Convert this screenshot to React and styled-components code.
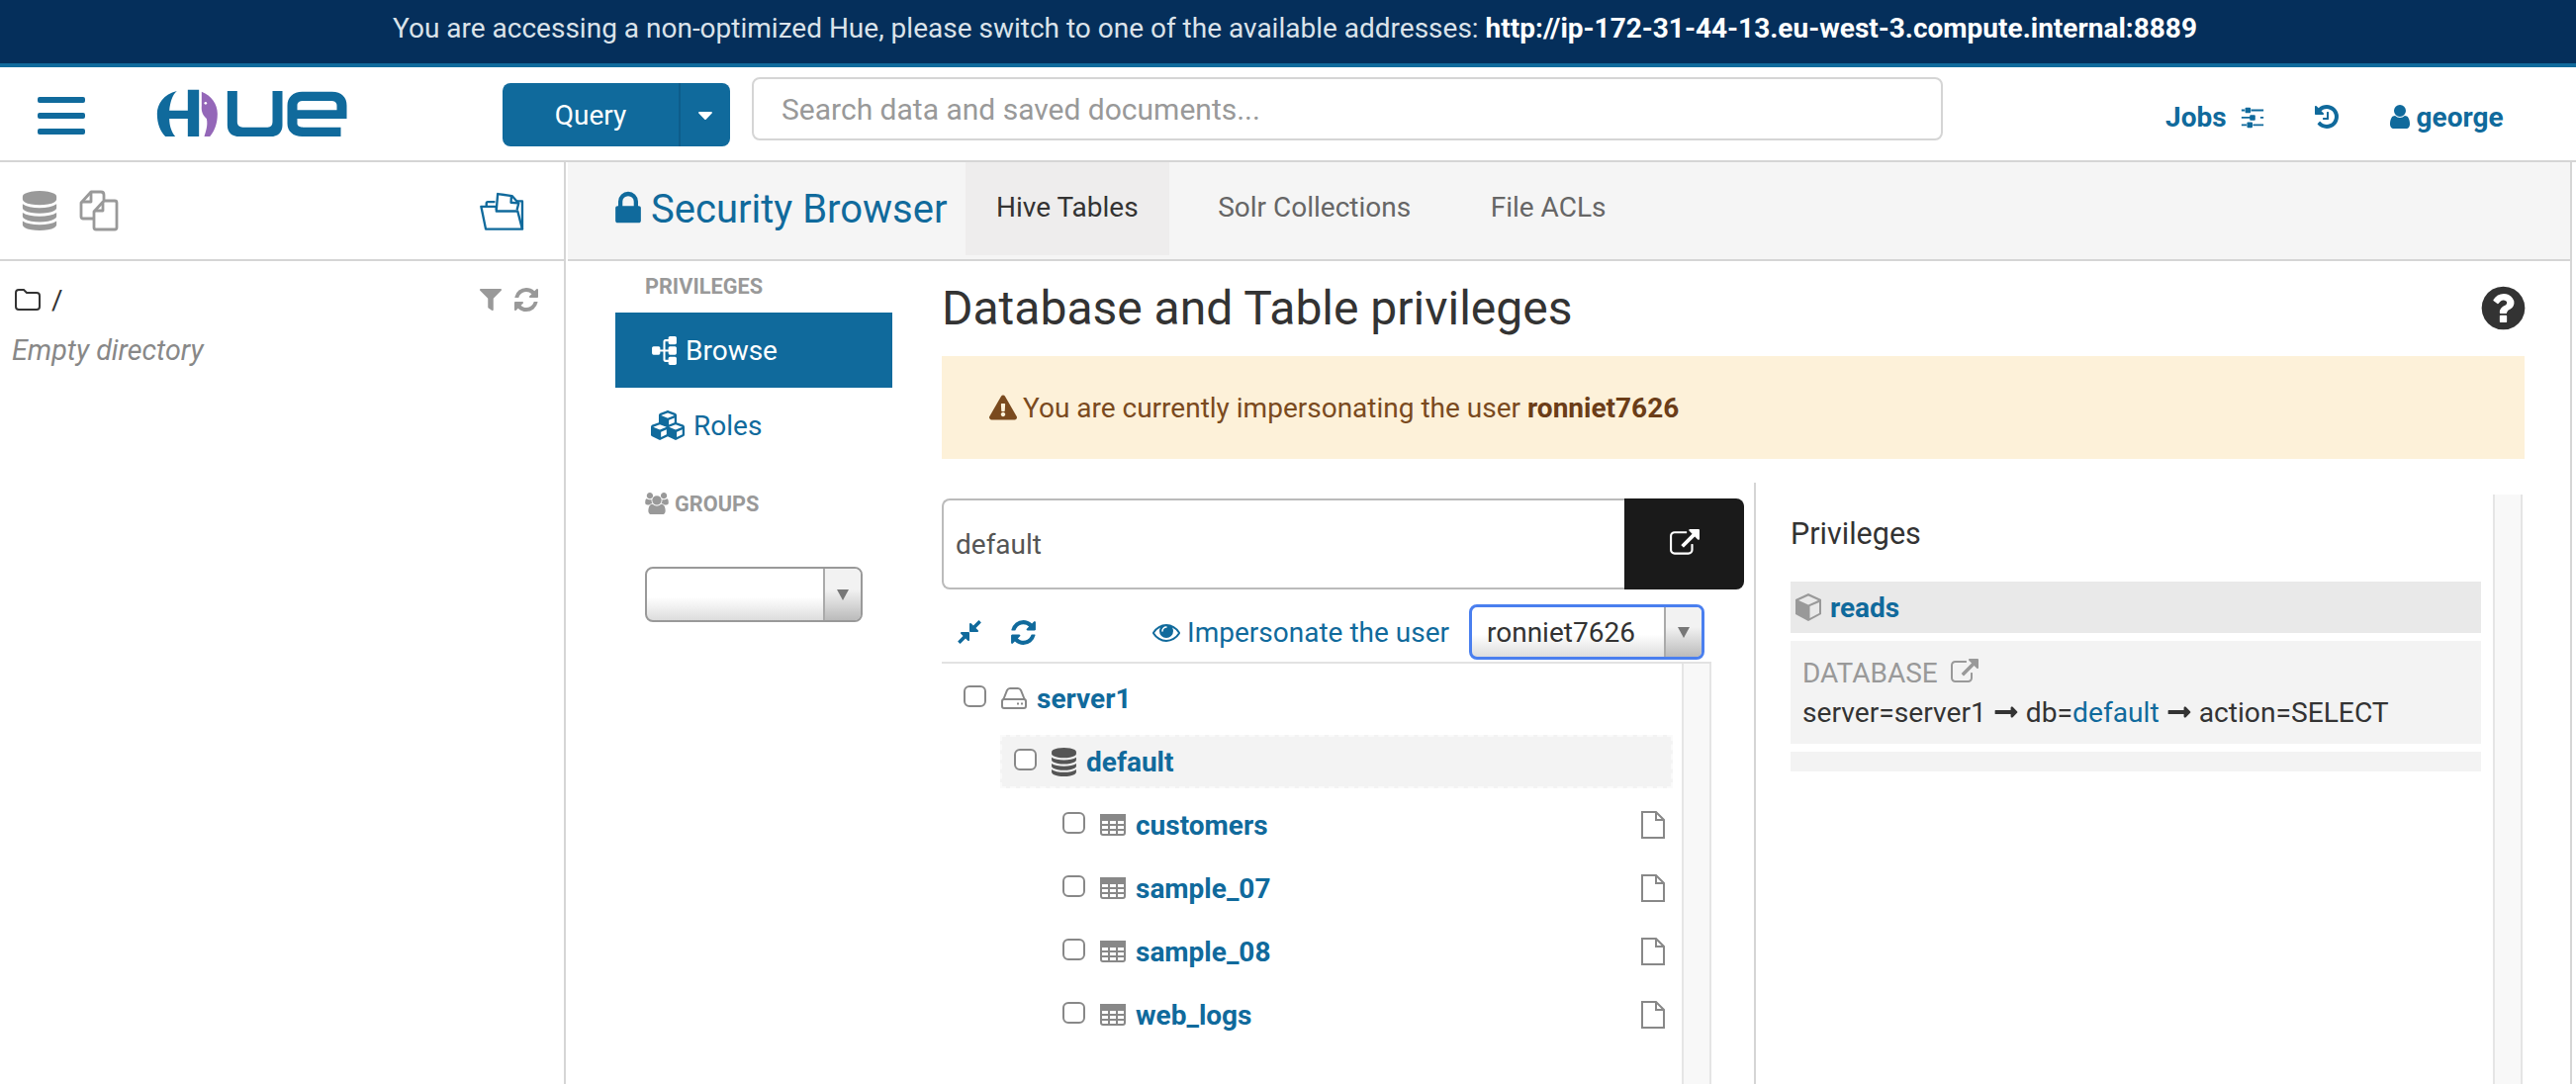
import styled, { createGlobalStyle } from "styled-components";
import { FaCubes, FaFilter, FaExclamationTriangle, FaLongArrowAltRight, FaCaretDown } from "react-icons/fa";

const BRAND = "#106a9c";

const paths = {
  refresh: "M1639 1056q0 5-1 7-64 268-268 434.5t-478 166.5q-146 0-282.5-55t-243.5-157l-129 129q-19 19-45 19t-45-19-19-45v-448q0-26 19-45t45-19h448q26 0 45 19t19 45-19 45l-137 137q71 66 161 102t187 36q134 0 250-65t186-179q11-17 53-117 8-23 30-23h192q13 0 22.5 9.5t9.5 22.5zm25-800v448q0 26-19 45t-45 19h-448q-26 0-45-19t-19-45 19-45l138-138q-148-137-349-137-134 0-250 65t-186 179q-11 17-53 117-8 23-30 23h-199q-13 0-22.5-9.5t-9.5-22.5v-7q65-268 270-434.5t480-166.5q146 0 284 55.5t245 156.5l130-129q19-19 45-19t45 19 19 45z",
  compress: "M896 960v448q0 26-19 45t-45 19-45-19l-144-144-332 332q-10 10-23 10t-23-10l-114-114q-10-10-10-23t10-23l332-332-144-144q-19-19-19-45t19-45 45-19h448q26 0 45 19t19 45zm755-672q0 13-10 23l-332 332 144 144q19 19 19 45t-19 45-45 19h-448q-26 0-45-19t-19-45v-448q0-26 19-45t45-19 45 19l144 144 332-332q10-10 23-10t23 10l114 114q10 10 10 23z",
  sitemap: "M1792 1248v320q0 40-28 68t-68 28h-320q-40 0-68-28t-28-68v-320q0-40 28-68t68-28h96v-192h-512v192h96q40 0 68 28t28 68v320q0 40-28 68t-68 28h-320q-40 0-68-28t-28-68v-320q0-40 28-68t68-28h96v-192h-512v192h96q40 0 68 28t28 68v320q0 40-28 68t-68 28h-320q-40 0-68-28t-28-68v-320q0-40 28-68t68-28h96v-192q0-52 38-90t90-38h512v-192h-96q-40 0-68-28t-28-68v-320q0-40 28-68t68-28h320q40 0 68 28t28 68v320q0 40-28 68t-68 28h-96v192h512q52 0 90 38t38 90v192h96q40 0 68 28t28 68z",
  external: "M1408 928v320q0 119-84.5 203.5t-203.5 84.5h-832q-119 0-203.5-84.5t-84.5-203.5v-832q0-119 84.5-203.5t203.5-84.5h704q14 0 23 9t9 23v64q0 14-9 23t-23 9h-704q-66 0-113 47t-47 113v832q0 66 47 113t113 47h832q66 0 113-47t47-113v-320q0-14 9-23t23-9h64q14 0 23 9t9 23zm384-864v512q0 26-19 45t-45 19-45-19l-176-176-652 652q-10 10-23 10t-23-10l-114-114q-10-10-10-23t10-23l652-652-176-176q-19-19-19-45t19-45 45-19h512q26 0 45 19t19 45z",
  lock: "M640 768h512v-192q0-106-75-181t-181-75-181 75-75 181v192zm832 96v576q0 40-28 68t-68 28h-960q-40 0-68-28t-28-68v-576q0-40 28-68t68-28h32v-192q0-184 132-316t316-132 316 132 132 316v192h32q40 0 68 28t28 68z",
  user: "M1536 1399q0 109-62.5 187t-150.5 78h-854q-88 0-150.5-78t-62.5-187q0-85 8.5-160.5t31.5-152 58.5-131 94-89 134.5-34.5q131 128 313 128t313-128q76 0 134.5 34.5t94 89 58.5 131 31.5 152 8.5 160.5zm-256-887q0 159-112.5 271.5t-271.5 112.5-271.5-112.5-112.5-271.5 112.5-271.5 271.5-112.5 271.5 112.5 112.5 271.5z",
  database: "M896 768q237 0 443-43t325-127v170q0 69-103 128t-280 93.5-385 34.5-385-34.5-280-93.5-103-128v-170q119 84 325 127t443 43zm0 768q237 0 443-43t325-127v170q0 69-103 128t-280 93.5-385 34.5-385-34.5-280-93.5-103-128v-170q119 84 325 127t443 43zm0-384q237 0 443-43t325-127v170q0 69-103 128t-280 93.5-385 34.5-385-34.5-280-93.5-103-128v-170q119 84 325 127t443 43zm0-1152q208 0 385 34.5t280 93.5 103 128v128q0 69-103 128t-280 93.5-385 34.5-385-34.5-280-93.5-103-128v-128q0-69 103-128t280-93.5 385-34.5z",
  question: "M1024 1376v-192q0-14-9-23t-23-9h-192q-14 0-23 9t-9 23v192q0 14 9 23t23 9h192q14 0 23-9t9-23zm256-672q0-88-55.5-163t-138.5-116-170-41q-243 0-371 213-15 24 8 42l132 100q7 6 19 6 16 0 25-12 53-68 86-92 34-24 86-24 48 0 85.5 26t37.5 59q0 38-20 61t-68 45q-63 28-115.5 86.5t-52.5 125.5v36q0 14 9 23t23 9h192q14 0 23-9t9-23q0-19 21.5-49.5t54.5-49.5q32-18 49-28.5t46-35 44.5-48 28-60.5 12.5-81zm384 192q0 209-103 385.5t-279.5 279.5-385.5 103-385.5-103-279.5-279.5-103-385.5 103-385.5 279.5-279.5 385.5-103 385.5 103 279.5 279.5 103 385.5z",
  eye: "M1664 960q-152-236-381-353 61 104 61 225 0 185-131.5 316.5t-316.5 131.5-316.5-131.5-131.5-316.5q0-121 61-225-229 117-381 353 133 205 333.5 326.5t434.5 121.5 434.5-121.5 333.5-326.5zm-720-384q0-20-14-34t-34-14q-125 0-214.5 89.5t-89.5 214.5q0 20 14 34t34 14 34-14 14-34q0-86 61-147t147-61q20 0 34-14t14-34zm848 384q0 34-20 69-140 230-376.5 368.5t-499.5 138.5-499.5-139-376.5-368q-20-35-20-69t20-69q140-229 376.5-368t499.5-139 499.5 139 376.5 368q20 35 20 69z",
  history: "M1664 896q0 156-61 298t-164 245-245 164-298 61q-172 0-327-72.5t-264-204.5q-7-10-6.5-22.5t8.5-20.5l137-138q10-9 25-9 16 2 23 12 73 95 179 147t225 52q104 0 198.5-40.5t163.5-109.5 109.5-163.5 40.5-198.5-40.5-198.5-109.5-163.5-163.5-109.5-198.5-40.5q-98 0-188 35.5t-160 101.5l137 138q31 30 14 69-17 40-59 40h-448q-26 0-45-19t-19-45v-448q0-42 40-59 39-17 69 14l130 129q107-101 244.5-156.5t284.5-55.5q156 0 298 61t245 164 164 245 61 298zm-640-288v448q0 14-9 23t-23 9h-320q-14 0-23-9t-9-23v-64q0-14 9-23t23-9h224v-352q0-14 9-23t23-9h64q14 0 23 9t9 23z",
  sliders: "M480 1408v128h-352v-128h352zm352-128q26 0 45 19t19 45v256q0 26-19 45t-45 19h-256q-26 0-45-19t-19-45v-256q0-26 19-45t45-19h256zm160-384v128h-864v-128h864zm-640-512v128h-224v-128h224zm1312 1024v128h-736v-128h736zm-960-1152q26 0 45 19t19 45v256q0 26-19 45t-45 19h-256q-26 0-45-19t-19-45v-256q0-26 19-45t45-19h256zm320 512q26 0 45 19t19 45v256q0 26-19 45t-45 19h-256q-26 0-45-19t-19-45v-256q0-26 19-45t45-19h256zm640 128v128h-224v-128h224zm0-512v128h-864v-128h864z",
};

const USERS_PATH = "M593 896q-162 5-265 128h-134q-82 0-138-40.5t-56-118.5q0-353 124-353 6 0 43.5 21t97.5 42.5 119 21.5q67 0 133-23-5 37-5 66 0 139 81 256zm1071 637q0 120-73 189.5t-194 69.5h-874q-121 0-194-69.5t-73-189.5q0-53 3.5-103.5t14-109 26.5-108.5 43-97.5 62-81 85.5-53.5 111.5-20q10 0 43 21.5t73 48 107 48 135 21.5 135-21.5 107-48 73-48 43-21.5q61 0 111.5 20t85.5 53.5 62 81 43 97.5 26.5 108.5 14 109 3.5 103.5zm-1024-1277q0 106-75 181t-181 75-181-75-75-181 75-181 181-75 181 75 75 181zm704 384q0 159-112.5 271.5t-271.5 112.5-271.5-112.5-112.5-271.5 112.5-271.5 271.5-112.5 271.5 112.5 112.5 271.5zm576 225q0 78-56 118.5t-138 40.5h-134q-103-123-265-128 81-117 81-256 0-29-5-66 66 23 133 23 59 0 119-21.5t97.5-42.5 43.5-21q124 0 124 353zm-128-609q0 106-75 181t-181 75-181-75-75-181 75-181 181-75 181 75 75 181z";

const GlobalStyle = createGlobalStyle`
  html, body { margin: 0; padding: 0; height: 1096px; overflow: hidden; background: #fff; }
  body { font-family: Roboto, "Liberation Sans", sans-serif; font-size: 28px; color: #333; }
  * { box-sizing: border-box; }
`;

const Page = styled.div`
  width: 2604px;
  height: 1096px;
  display: flex;
  flex-direction: column;
  overflow: hidden;
`;

const Banner = styled.div`
  height: 68px;
  flex: none;
  background: #052f5b;
  border-bottom: 4px solid ${BRAND};
  color: #dbe3ea;
  font-size: 28px;
  line-height: 58px;
  text-align: center;
  padding-left: 14px;
  b { color: #fff; font-weight: 700; }
`;

const Nav = styled.div`
  height: 96px;
  flex: none;
  border-bottom: 2px solid #d5d5d5;
  display: flex;
  align-items: flex-start;
  padding-left: 38px;
`;

const Hamburger = styled.div`
  width: 48px;
  margin-top: 30px;
  display: flex;
  flex-direction: column;
  gap: 10px;
  span { height: 6px; border-radius: 2px; background: ${BRAND}; }
`;

const LogoMark = styled.svg`
  width: 197px;
  height: 49px;
  margin: 22px 0 0 71px;
  flex: none;
`;

const QueryGroup = styled.div`
  width: 230px;
  height: 64px;
  margin: 16px 0 0 154px;
  flex: none;
  display: flex;
  background: ${BRAND};
  border-radius: 8px;
  color: #fff;
`;

const QueryLabel = styled.div`
  width: 180px;
  border-right: 2px solid #0d5d8b;
  text-align: center;
  line-height: 66px;
  font-size: 28px;
`;

const QueryCaret = styled.div`
  flex: 1;
  display: flex;
  align-items: center;
  justify-content: center;
  font-size: 24px;
`;

const Search = styled.input`
  width: 1204px;
  height: 64px;
  margin: 10px 0 0 22px;
  flex: none;
  border: 2px solid #d5d5d5;
  border-radius: 8px;
  padding: 0 28px;
  font: 30px Roboto, sans-serif;
  outline: none;
  &::placeholder { color: #999; opacity: 1; }
`;

const NavLink = styled.div`
  display: flex;
  align-items: center;
  gap: ${(p) => p.$gap || 0}px;
  height: 50px;
  margin: 25px 0 0 ${(p) => p.$left}px;
  color: ${BRAND};
  font-weight: 700;
  font-size: 28px;
`;

const Body = styled.div`
  flex: 1;
  display: flex;
  min-height: 0;
`;

const Assist = styled.div`
  width: 572px;
  flex: none;
  border-right: 2px solid #d5d5d5;
`;

const AssistHead = styled.div`
  height: 100px;
  border-bottom: 2px solid #d5d5d5;
  display: flex;
  align-items: center;
  padding: 0 39px 0 20px;
  gap: 20px;
  & > :last-child { margin-left: auto; }
`;

const AssistRow = styled.div`
  height: 54px;
  margin-top: 12px;
  padding: 0 24px 0 15px;
  display: flex;
  align-items: center;
  gap: 11px;
  & > :nth-child(3) { margin-left: auto; }
`;

const EmptyNote = styled.div`
  padding-left: 12px;
  margin-top: -6px;
  font-style: italic;
  font-size: 28.7px;
  color: #888;
  line-height: 60px;
`;

const Main = styled.div`
  flex: none;
  width: 2026px;
  margin-left: 2px;
  border-right: 2px solid #d5d5d5;
  display: flex;
  flex-direction: column;
`;

const SectionBar = styled.div`
  height: 100px;
  flex: none;
  background: #f5f5f5;
  border-bottom: 2px solid #d5d5d5;
  display: flex;
  align-items: flex-start;
  padding-left: 48px;
`;

const AppTitle = styled.div`
  display: flex;
  align-items: center;
  gap: 3px;
  height: 94px;
  width: 354px;
  flex: none;
  color: ${BRAND};
  font-size: 40px;
  svg { margin-left: -7px; }
`;

const Tab = styled.div`
  height: 94px;
  padding: 0 31px;
  margin-right: 18.5px;
  line-height: 92px;
  font-size: 28px;
  color: ${(p) => (p.$active ? "#333" : "#666")};
  background: ${(p) => (p.$active ? "#eeeded" : "transparent")};
`;

const Content = styled.div`
  flex: 1;
  display: flex;
  min-height: 0;
  padding-left: 48px;
`;

const SideNav = styled.div`
  width: 280px;
  flex: none;
  margin-right: 50px;
`;

const SideTitle = styled.div`
  display: flex;
  align-items: center;
  gap: 6px;
  height: 52px;
  margin-top: ${(p) => p.$top || 0}px;
  padding: 0 0 2px 30px;
  font-size: 21.7px;
  font-weight: 700;
  color: #999;
`;

const SideItem = styled.div`
  height: 76px;
  display: flex;
  align-items: center;
  gap: ${(p) => p.$gap}px;
  padding-left: ${(p) => p.$pad}px;
  background: ${(p) => (p.$active ? BRAND : "transparent")};
  color: ${(p) => (p.$active ? "#fff" : BRAND)};
`;

const Select = styled.div`
  width: ${(p) => p.$width}px;
  height: 56px;
  flex: none;
  display: flex;
  border: ${(p) => (p.$focus ? "3px solid #4a7fef" : "2px solid #999")};
  border-radius: 8px;
  overflow: hidden;
  background: linear-gradient(#fff 55%, #ddd);
  font-size: 28px;
  color: #333;
`;

const SelectValue = styled.div`
  flex: 1;
  padding-left: 15px;
  line-height: 52px;
`;

const SelectArrow = styled.div`
  width: 38px;
  flex: none;
  border-left: 2px solid #aaa;
  background: linear-gradient(#f2f2f2 40%, #bbb);
  display: flex;
  align-items: center;
  justify-content: center;
  &::after {
    content: "";
    border-left: 6px solid transparent;
    border-right: 6px solid transparent;
    border-top: 11px solid #777;
  }
`;

const GroupsSelect = styled(Select)`
  margin: 37px 0 0 30px;
`;

const Column = styled.div`
  width: 1600px;
  flex: none;
  display: flex;
  flex-direction: column;
  min-height: 0;
`;

const TitleRow = styled.div`
  height: 96px;
  flex: none;
  display: flex;
  align-items: center;
  justify-content: space-between;
  padding-bottom: 2px;
  h1 { margin: 0; font-weight: 400; font-size: 48px; color: #333; }
  svg { margin-right: -4px; }
`;

const Alert = styled.div`
  height: 104px;
  flex: none;
  background: #fdf1d9;
  color: #7a4a1e;
  display: flex;
  align-items: center;
  gap: 6px;
  padding-left: 48px;
  b { color: #6b3d18; font-weight: 700; }
`;

const Panes = styled.div`
  flex: 1;
  display: flex;
  margin-top: 24px;
  min-height: 0;
`;

const LeftPane = styled.div`
  width: 821px;
  flex: none;
  padding-top: 16px;
  display: flex;
  flex-direction: column;
`;

const PathRow = styled.div`
  width: 811px;
  height: 92px;
  flex: none;
  display: flex;
`;

const PathInput = styled.input`
  flex: 1;
  min-width: 0;
  border: 2px solid #bbb;
  border-right: none;
  border-radius: 8px 0 0 8px;
  padding: 0 12px;
  font: 28px Roboto, sans-serif;
  color: #555;
  outline: none;
`;

const PathButton = styled.div`
  width: 121px;
  flex: none;
  background: #1a1a1a;
  border-radius: 0 8px 8px 0;
  display: flex;
  align-items: center;
  justify-content: center;
`;

const Toolbar = styled.div`
  width: 778px;
  height: 75px;
  flex: none;
  display: flex;
  align-items: center;
  padding: 13px 7px 0 14px;
  border-bottom: 2px solid #e2e2e2;
  gap: 26px;
`;

const Impersonate = styled.div`
  margin-left: auto;
  margin-right: -6px;
  display: flex;
  align-items: center;
  gap: 7px;
  color: ${BRAND};
`;

const TreeWrap = styled.div`
  width: 778px;
  flex: 1;
  display: flex;
  min-height: 0;
`;

const Tree = styled.div`
  flex: 1;
  padding-top: 8px;
  display: flex;
  flex-direction: column;
  gap: 10px;
`;

const ScrollTrack = styled.div`
  width: 30px;
  flex: none;
  background: #f8f8f8;
  border-left: 2px solid #e5e5e5;
  border-right: 2px solid #e5e5e5;
`;

const TreeRow = styled.div`
  height: 54px;
  flex: none;
  margin: 0 9px 0 ${(p) => [8, 59, 108][p.$depth]}px;
  padding: 0 8px 0 14px;
  display: flex;
  align-items: center;
  gap: 10px;
  font-weight: 700;
  color: ${BRAND};
  background: ${(p) => (p.$selected ? "#f3f3f3" : "transparent")};
  outline: ${(p) => (p.$selected ? "2px dashed #fafafa" : "none")};
  outline-offset: -2px;
`;

const Checkbox = styled.span`
  width: 23px;
  height: 22px;
  flex: none;
  margin-right: 5px;
  margin-top: -4px;
  border: 2px solid #888;
  border-radius: 6px;
  background: #fff;
`;

const RightPane = styled.div`
  flex: 1;
  min-width: 0;
  border-left: 2px solid #d5d5d5;
  padding-left: 35px;
  display: flex;
`;

const PrivList = styled.div`
  width: 698px;
  flex: none;
  margin-right: 12px;
  padding-top: 30px;
  display: flex;
  flex-direction: column;
`;

const PaneTitle = styled.div`
  height: 70px;
  font-size: 30.5px;
  color: #333;
  line-height: 44px;
`;

const PrivHead = styled.div`
  height: 52px;
  flex: none;
  background: #e9e9e9;
  display: flex;
  align-items: center;
  gap: 9px;
  padding-left: 5px;
  font-weight: 700;
  color: ${BRAND};
`;

const PrivCard = styled.div`
  height: ${(p) => p.$height}px;
  flex: none;
  margin-top: 8px;
  background: #f3f3f3;
  padding: 13px 12px 0;
`;

const PrivType = styled.div`
  display: flex;
  align-items: center;
  gap: 13px;
  height: 38px;
  color: #999;
  font-size: 28px;
`;

const PrivLine = styled.div`
  display: flex;
  align-items: center;
  gap: 7px;
  height: 42px;
  font-size: 28.2px;
  white-space: pre;
  span.link { color: ${BRAND}; }
`;

const RightTrack = styled(ScrollTrack)`
  margin-top: 12px;
`;

const IconSvg = styled.svg`
  flex: none;
  transform: ${(p) => (p.$rotate ? `rotate(${p.$rotate}deg)` : "none")};
`;

const TreeDbIcon = styled(IconSvg)`
  margin: 0 -2px 0 -2px;
`;

const FileSvg = styled(IconSvg)`
  margin-left: auto;
`;

const Fa = ({ d, size, color, rotate, as: Svg = IconSvg }) => (
  <Svg viewBox="0 0 1792 1792" width={size} height={size} fill={color} $rotate={rotate}>
    <path d={d} />
  </Svg>
);

const Logo = () => (
  <LogoMark viewBox="80 60 590 147">
    <path
      fill={BRAND}
      d="M145 66C105 76 85 105 85 135C85 165 95 190 110 204L140 204C128 190 122 170 122 150L178 150L178 204L212 204L212 62L178 62L178 125L122 125C125 100 130 80 145 66Z"
    />
    <path
      fill="#9467b8"
      d="M220 68C250 80 268 105 268 135C268 165 258 190 245 204L228 204C232 190 240 170 235 150C225 140 218 130 220 110Z"
    />
    <circle cx="232" cy="103" r="4" fill="#fff" />
    <path
      fill={BRAND}
      d="M298 66L328 66L328 160C328 170 335 176 345 176L420 176C430 176 435 170 435 160L435 66L465 66L465 170C465 192 450 204 430 204L335 204C312 204 298 192 298 170Z"
    />
    <path
      fill={BRAND}
      fillRule="evenodd"
      d="M480 110C480 85 497 68 525 68L615 68C645 68 660 85 660 110L660 150L510 150L510 165C510 172 518 176 528 176L642 176L642 204L525 204C497 204 480 188 480 165ZM510 124L630 124L630 110C630 100 622 96 612 96L528 96C518 96 510 100 510 110Z"
    />
  </LogoMark>
);

const FilesIcon = () => (
  <IconSvg width="40" height="42" viewBox="0 0 40 42" fill="none" stroke="#999" strokeWidth="2.8" strokeLinejoin="round">
    <path d="M14 29H4Q2 29 2 27V13L12 2H22Q25 2 25 5V10" />
    <path d="M12 3V12H3" />
    <path d="M15 22L25 11H36Q38 11 38 13V38Q38 40 36 40H17Q15 40 15 38Z" />
    <path d="M24 12V21H16" />
  </IconSvg>
);

const FolderOpenIcon = () => (
  <IconSvg width="47" height="41" viewBox="45 35 140 122" fill="none" stroke={BRAND} strokeWidth="7" strokeLinejoin="round">
    <path d="M68 82V72Q68 68 72 68H94" />
    <path d="M52 82H98V96H162L176 150H66Z" />
    <path d="M98 92L102 44L145 50L165 72L160 92" />
    <path d="M143 52L142 70L163 72" />
    <path d="M160 66H176V150" />
  </IconSvg>
);

const FolderIcon = () => (
  <IconSvg width="26" height="22" viewBox="0 0 26 22" fill="none" stroke="#333" strokeWidth="2">
    <path d="M1 4Q1 1 4 1H9L12 4H22Q25 4 25 7V18Q25 21 22 21H4Q1 21 1 18Z" />
  </IconSvg>
);

const UsersIcon = () => (
  <IconSvg width="24" height="22" viewBox="0 0 1920 1792" fill="#999">
    <path d={USERS_PATH} />
  </IconSvg>
);

const ServerIcon = () => (
  <IconSvg width="26" height="22" viewBox="0 0 26 22" fill="none" stroke="#888" strokeWidth="2">
    <path d="M2 13L6 3Q7 1 9 1H17Q19 1 20 3L24 13" />
    <rect x="1" y="12" width="24" height="9" rx="2" />
    <path d="M16 16.5H18M20 16.5H22" />
  </IconSvg>
);

const TableIcon = () => (
  <IconSvg width="26" height="22" viewBox="0 0 26 22" fill="none" stroke="#888" strokeWidth="2">
    <rect x="1" y="1" width="24" height="20" rx="2" />
    <rect x="1" y="1" width="24" height="5" fill="#888" />
    <path d="M9 6V21M17 6V21M1 11H25M1 16H25" />
  </IconSvg>
);

const FileIcon = () => (
  <FileSvg width="24" height="28" viewBox="0 0 24 28" fill="none" stroke="#888" strokeWidth="2">
    <path d="M1 1H15L23 9V27H1Z" />
    <path d="M15 1V9H23" />
  </FileSvg>
);

const CubeIcon = () => (
  <IconSvg width="26" height="28" viewBox="0 0 26 28">
    <path fill="#999" d="M13 0L26 6V21L13 28L0 21V6Z" />
    <path fill="#e9e9e9" d="M13 2.5L23 7L13 11.5L3 7Z" />
    <path fill="#e9e9e9" d="M14.5 13L24 9V20L14.5 25Z" />
  </IconSvg>
);

const tables = ["customers", "sample_07", "sample_08", "web_logs"];

const App = () => (
  <Page>
    <GlobalStyle />
    <Banner>
      You are accessing a non-optimized Hue, please switch to one of the available addresses:{" "}
      <b>http://ip-172-31-44-13.eu-west-3.compute.internal:8889</b>
    </Banner>
    <Nav>
      <Hamburger><span /><span /><span /></Hamburger>
      <Logo />
      <QueryGroup>
        <QueryLabel>Query</QueryLabel>
        <QueryCaret><FaCaretDown /></QueryCaret>
      </QueryGroup>
      <Search placeholder="Search data and saved documents..." readOnly />
      <NavLink $left={225} $gap={13}>Jobs <Fa d={paths.sliders} size={26} color={BRAND} /></NavLink>
      <NavLink $left={48}><Fa d={paths.history} size={28} color={BRAND} /></NavLink>
      <NavLink $left={46} $gap={3}><Fa d={paths.user} size={28} color={BRAND} />george</NavLink>
    </Nav>
    <Body>
      <Assist>
        <AssistHead>
          <Fa d={paths.database} size={40} color="#999" />
          <FilesIcon />
          <FolderOpenIcon />
        </AssistHead>
        <AssistRow>
          <FolderIcon />
          <span>/</span>
          <FaFilter size={22} color="#999" />
          <Fa d={paths.refresh} size={28} color="#999" />
        </AssistRow>
        <EmptyNote>Empty directory</EmptyNote>
      </Assist>
      <Main>
        <SectionBar>
          <AppTitle>
            <Fa d={paths.lock} size={40} color={BRAND} />
            Security Browser
          </AppTitle>
          <Tab $active>Hive Tables</Tab>
          <Tab>Solr Collections</Tab>
          <Tab>File ACLs</Tab>
        </SectionBar>
        <Content>
          <SideNav>
            <SideTitle>PRIVILEGES</SideTitle>
            <SideItem $active $pad={35} $gap={7}>
              <Fa d={paths.sitemap} size={29} color="#fff" rotate={-90} />
              Browse
            </SideItem>
            <SideItem $pad={36} $gap={9}>
              <FaCubes size={34} />
              Roles
            </SideItem>
            <SideTitle $top={16}>
              <UsersIcon />
              GROUPS
            </SideTitle>
            <GroupsSelect $width={220}>
              <SelectValue />
              <SelectArrow />
            </GroupsSelect>
          </SideNav>
          <Column>
            <TitleRow>
              <h1>Database and Table privileges</h1>
              <Fa d={paths.question} size={51} color="#333" />
            </TitleRow>
            <Alert>
              <FaExclamationTriangle size={28} />
              <span>You are currently impersonating the user <b>ronniet7626</b></span>
            </Alert>
            <Panes>
              <LeftPane>
                <PathRow>
                  <PathInput value="default" readOnly />
                  <PathButton><Fa d={paths.external} size={30} color="#fff" /></PathButton>
                </PathRow>
                <Toolbar>
                  <Fa d={paths.compress} size={28} color={BRAND} />
                  <Fa d={paths.refresh} size={29} color={BRAND} />
                  <Impersonate>
                    <Fa d={paths.eye} size={28} color={BRAND} />
                    Impersonate the user
                  </Impersonate>
                  <Select $width={238} $focus>
                    <SelectValue>ronniet7626</SelectValue>
                    <SelectArrow />
                  </Select>
                </Toolbar>
                <TreeWrap>
                  <Tree>
                    <TreeRow $depth={0}>
                      <Checkbox />
                      <ServerIcon />
                      server1
                    </TreeRow>
                    <TreeRow $depth={1} $selected>
                      <Checkbox />
                      <Fa as={TreeDbIcon} d={paths.database} size={29} color="#555" />
                      default
                    </TreeRow>
                    {tables.map((name) => (
                      <TreeRow key={name} $depth={2}>
                        <Checkbox />
                        <TableIcon />
                        {name}
                        <FileIcon />
                      </TreeRow>
                    ))}
                  </Tree>
                  <ScrollTrack />
                </TreeWrap>
              </LeftPane>
              <RightPane>
                <PrivList>
                  <PaneTitle>Privileges</PaneTitle>
                  <PrivHead>
                    <CubeIcon />
                    reads
                  </PrivHead>
                  <PrivCard $height={104}>
                    <PrivType>
                      DATABASE
                      <Fa d={paths.external} size={28} color="#999" />
                    </PrivType>
                    <PrivLine>
                      server=server1
                      <FaLongArrowAltRight size={26} />
                      <span>db=<span className="link">default</span></span>
                      <FaLongArrowAltRight size={26} />
                      action=SELECT
                    </PrivLine>
                  </PrivCard>
                  <PrivCard $height={20} />
                </PrivList>
                <RightTrack />
              </RightPane>
            </Panes>
          </Column>
        </Content>
      </Main>
    </Body>
  </Page>
);

export default App;
